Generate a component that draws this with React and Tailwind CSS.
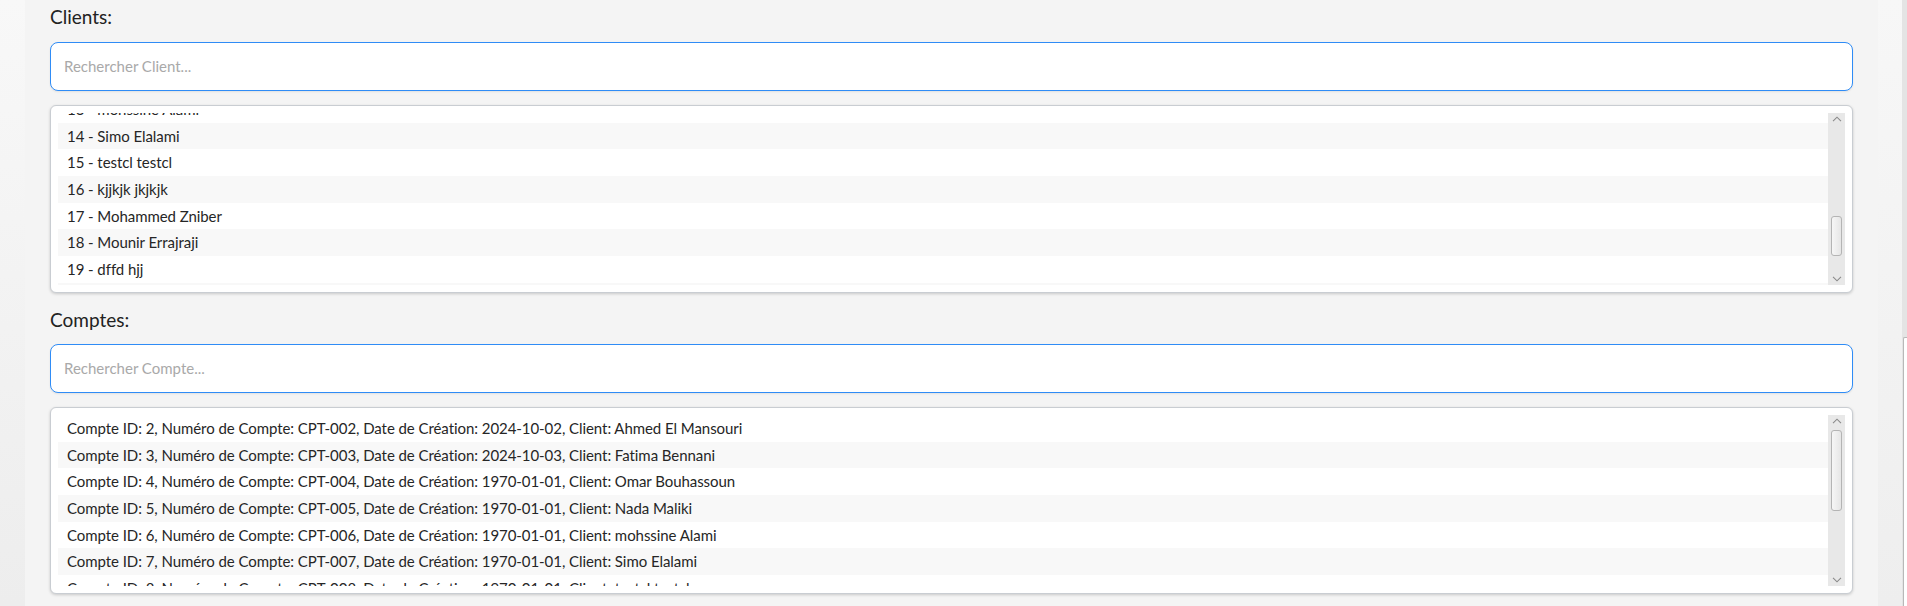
import React from "react";

const clients = [
  "13 - mohssine Alami",
  "14 - Simo Elalami",
  "15 - testcl testcl",
  "16 - kjjkjk jkjkjk",
  "17 - Mohammed Zniber",
  "18 - Mounir Errajraji",
  "19 - dffd hjj",
  "20 - test test",
];

const comptes = [
  "Compte ID: 2, Numéro de Compte: CPT-002, Date de Création: 2024-10-02, Client: Ahmed El Mansouri",
  "Compte ID: 3, Numéro de Compte: CPT-003, Date de Création: 2024-10-03, Client: Fatima Bennani",
  "Compte ID: 4, Numéro de Compte: CPT-004, Date de Création: 1970-01-01, Client: Omar Bouhassoun",
  "Compte ID: 5, Numéro de Compte: CPT-005, Date de Création: 1970-01-01, Client: Nada Maliki",
  "Compte ID: 6, Numéro de Compte: CPT-006, Date de Création: 1970-01-01, Client: mohssine Alami",
  "Compte ID: 7, Numéro de Compte: CPT-007, Date de Création: 1970-01-01, Client: Simo Elalami",
  "Compte ID: 8, Numéro de Compte: CPT-008, Date de Création: 1970-01-01, Client: testcl testcl",
];

function Chevron({ up }) {
  return (
    <svg width="10" height="6" viewBox="0 0 10 6" className="block">
      <path
        d={up ? "M1 5.2 L5 1.2 L9 5.2" : "M1 0.8 L5 4.8 L9 0.8"}
        fill="none"
        stroke="#8a8a8a"
        strokeWidth="1.1"
      />
    </svg>
  );
}

function ScrollBar({ thumbTop, thumbHeight }) {
  return (
    <div className="relative w-[17px] h-full bg-[#e8e8e8] shrink-0">
      <div className="absolute top-[3px] left-0 w-full flex justify-center">
        <Chevron up />
      </div>
      <div
        className="absolute left-[3px] w-[11px] rounded-[3px] border border-[#b4b4b4] bg-gradient-to-r from-[#f6f6f6] to-[#e6e6e6]"
        style={{ top: thumbTop, height: thumbHeight }}
      />
      <div className="absolute bottom-[3px] left-0 w-full flex justify-center">
        <Chevron />
      </div>
    </div>
  );
}

function ListBox({ items, height, offset, firstGray, thumbTop, thumbHeight }) {
  return (
    <div
      className="rounded-[6px] border border-[#c9cdd2] bg-white shadow-[0_1px_3px_rgba(0,0,0,0.18)] p-[7px] flex"
      style={{ height }}
    >
      <div className="flex-1 overflow-hidden h-full">
        <div style={{ marginTop: offset }}>
          {items.map((t, i) => {
            const gray = (i % 2 === 0) === firstGray;
            return (
              <div
                key={i}
                className={`h-[26.67px] flex items-center pl-[9px] text-[15px] tracking-[-0.06px] text-[#262626] whitespace-nowrap ${
                  gray ? "bg-[#f8f8f8]" : "bg-white"
                }`}
              >
                {t}
              </div>
            );
          })}
        </div>
      </div>
      <ScrollBar thumbTop={thumbTop} thumbHeight={thumbHeight} />
    </div>
  );
}

function SearchInput({ placeholder }) {
  return (
    <div className="h-[49px] rounded-[8px] border-[1.5px] border-[#2f8cf6] bg-white flex items-center pl-[13px] shadow-[0_1px_2px_rgba(0,0,0,0.08)]">
      <span className="text-[15px] text-[#a9a9a9]">{placeholder}</span>
    </div>
  );
}

export default function App() {
  return (
    <div
      className="w-[1907px] h-[606px] flex bg-[#f4f4f4] overflow-hidden"
      style={{ fontFamily: "Lato, 'Noto Sans', sans-serif" }}
    >
      <div className="w-[25px] h-full bg-gradient-to-b from-[#f8f8f8] to-[#ededed] shrink-0" />
      <div className="flex-1 px-[25px] pt-[5px] flex flex-col">
        <div className="h-[24px] leading-[24px] text-[19px] text-[#222]">Clients:</div>
        <div className="mt-[13px]">
          <SearchInput placeholder="Rechercher Client..." />
        </div>
        <div className="mt-[14px]">
          <ListBox
            items={clients}
            height={188}
            offset={-17}
            firstGray={false}
            thumbTop={103}
            thumbHeight={40}
          />
        </div>
        <div className="mt-[15px] h-[24px] leading-[24px] text-[19px] text-[#222]">Comptes:</div>
        <div className="mt-[12px]">
          <SearchInput placeholder="Rechercher Compte..." />
        </div>
        <div className="mt-[14px]">
          <ListBox
            items={comptes}
            height={187}
            offset={0}
            firstGray={false}
            thumbTop={15}
            thumbHeight={81}
          />
        </div>
      </div>
      <div className="w-[24px] h-full bg-gradient-to-b from-[#f7f7f7] to-[#eeeeee] shrink-0" />
      <div className="w-[5px] h-full shrink-0 flex flex-col">
        <div className="h-[337px] bg-[#e4e4e4]" />
        <div className="flex-1 bg-[#e4e4e4] pl-[1px]">
          <div className="h-full bg-white border-l border-t border-[#b8b8b8] rounded-tl-[2px]" />
        </div>
      </div>
    </div>
  );
}
